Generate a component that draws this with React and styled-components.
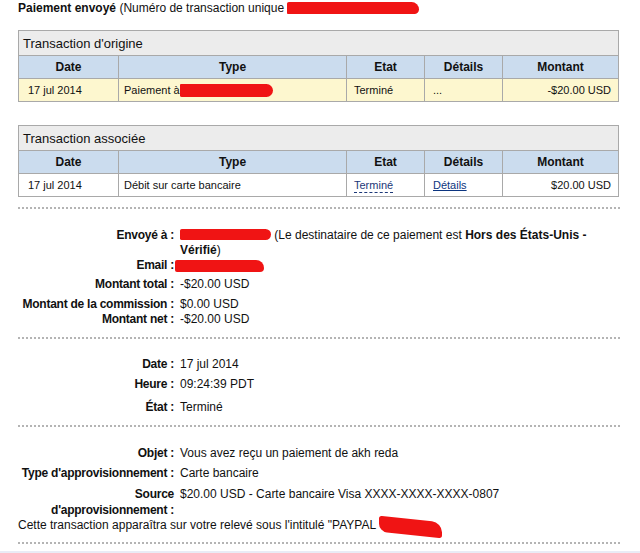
import React from "react";
import styled, { createGlobalStyle } from "styled-components";

const Global = createGlobalStyle`
  body {
    margin: 0;
    background: #fff;
    font-family: "Liberation Sans", Arial, sans-serif;
    color: #111;
  }
`;

const Page = styled.div`
  width: 640px;
  height: 553px;
  overflow: hidden;
  position: relative;
`;

const Title = styled.div`
  padding-left: 18px;
  font-size: 12px;
  line-height: 16px;
  white-space: nowrap;
  b { font-weight: bold; }
`;

const Redact = styled.span`
  display: inline-block;
  width: ${(p) => p.$w}px;
  height: ${(p) => p.$h}px;
  margin-left: ${(p) => p.$ml || 0}px;
  vertical-align: ${(p) => p.$va || 0}px;
  background: #f01414;
  border-radius: ${(p) => p.$r || "2px 6px 6px 2px"};
  transform: skewY(${(p) => p.$skew || 0}deg);
`;

const Table = styled.table`
  margin: ${(p) => p.$mt}px 0 0 18px;
  width: 600px;
  border-collapse: collapse;
  table-layout: fixed;
  font-size: 11px;
`;

const CaptionCell = styled.th`
  height: 24px;
  padding: 0 4px;
  background: #ececec;
  border: 1px solid #a9a9a9;
  text-align: left;
  font-weight: normal;
  font-size: 13px;
`;

const Th = styled.th`
  height: 22px;
  padding: 0;
  background: #cbdcee;
  border: 1px solid #a9a9a9;
  font-size: 12px;
  font-weight: bold;
  text-align: center;
`;

const Td = styled.td`
  height: 22px;
  padding: 0 ${(p) => (p.$right ? 7 : 6)}px 0 ${(p) => p.$pl || 6}px;
  background: ${(p) => (p.$yellow ? "#fdf7cf" : "#fff")};
  border: 1px solid #a9a9a9;
  text-align: ${(p) => (p.$right ? "right" : "left")};
  white-space: nowrap;
  overflow: hidden;
`;

const DashLink = styled.span`
  color: #1c3878;
  border-bottom: 1px dashed #1c3878;
  padding-bottom: 1px;
`;

const Link = styled.span`
  color: #0c3580;
  text-decoration: underline;
`;

const Divider = styled.div`
  margin: ${(p) => p.$mt}px 0 0 18px;
  width: 602px;
  border-top: 2px dotted #b4b4b4;
`;

const Row = styled.div`
  display: grid;
  grid-template-columns: 156px 436px;
  column-gap: 6px;
  padding-left: 18px;
  margin-top: ${(p) => p.$mt || 0}px;
  font-size: 12px;
  line-height: ${(p) => p.$lh || 15}px;
`;

const Label = styled.div`
  font-weight: bold;
  text-align: right;
  letter-spacing: -0.25px;
  white-space: ${(p) => (p.$wrap ? "normal" : "nowrap")};
`;

const Value = styled.div`
  b { font-weight: bold; }
`;

const Note = styled.div`
  padding-left: 18px;
  font-size: 12px;
  line-height: 15px;
  white-space: nowrap;
`;

const BottomRule = styled.div`
  position: absolute;
  left: 0;
  right: 0;
  bottom: 0;
  height: 2px;
  background: #e9ebf5;
`;

const cols = [100, 228, 78, 78, 116];

function TxTable({ mt, caption, row, yellow }) {
  return (
    <Table $mt={mt}>
      <colgroup>
        {cols.map((w, i) => (
          <col key={i} style={{ width: w }} />
        ))}
      </colgroup>
      <thead>
        <tr>
          <CaptionCell colSpan={5}>{caption}</CaptionCell>
        </tr>
        <tr>
          <Th>Date</Th>
          <Th>Type</Th>
          <Th>Etat</Th>
          <Th>Détails</Th>
          <Th>Montant</Th>
        </tr>
      </thead>
      <tbody>
        <tr>
          <Td $yellow={yellow} $pl={9}>{row.date}</Td>
          <Td $yellow={yellow} $pl={5}>{row.type}</Td>
          <Td $yellow={yellow} $pl={7}>{row.etat}</Td>
          <Td $yellow={yellow} $pl={8}>{row.details}</Td>
          <Td $yellow={yellow} $right>{row.montant}</Td>
        </tr>
      </tbody>
    </Table>
  );
}

export default function App() {
  return (
    <Page>
      <Global />
      <Title>
        <b>Paiement envoyé</b> (Numéro de transaction unique{" "}
        <Redact $w={132} $h={12} $va={-2} $r="2px 8px 5px 1px" />
      </Title>

      <TxTable
        mt={14}
        caption="Transaction d'origine"
        yellow
        row={{
          date: "17 jul 2014",
          type: (
            <>
              Paiement à<Redact $w={93} $h={13} $va={-3} $r="1px 7px 7px 2px" />
            </>
          ),
          etat: "Terminé",
          details: "...",
          montant: "-$20.00 USD",
        }}
      />

      <TxTable
        mt={23}
        caption="Transaction associée"
        row={{
          date: "17 jul 2014",
          type: "Débit sur carte bancaire",
          etat: <DashLink>Terminé</DashLink>,
          details: <Link>Détails</Link>,
          montant: "$20.00 USD",
        }}
      />

      <Divider $mt={10} />
      <Row $mt={19}>
        <Label>Envoyé à :</Label>
        <Value>
          <Redact $w={91} $h={11} $va={-1} $r="2px 6px 6px 2px" /> (Le
          destinataire de ce paiement est <b>Hors des États-Unis - Vérifié</b>)
        </Value>
      </Row>
      <Row>
        <Label>Email :</Label>
        <Value>
          <Redact $w={89} $h={12} $ml={-5} $va={-3} $r="2px 8px 4px 2px" />
        </Value>
      </Row>
      <Row $mt={4}>
        <Label>Montant total :</Label>
        <Value>-$20.00 USD</Value>
      </Row>
      <Row $mt={5}>
        <Label>Montant de la commission :</Label>
        <Value>$0.00 USD</Value>
      </Row>
      <Row>
        <Label>Montant net :</Label>
        <Value>-$20.00 USD</Value>
      </Row>

      <Divider $mt={10} />
      <Row $mt={18}>
        <Label>Date :</Label>
        <Value>17 jul 2014</Value>
      </Row>
      <Row $mt={5}>
        <Label>Heure :</Label>
        <Value>09:24:39 PDT</Value>
      </Row>
      <Row $mt={8}>
        <Label>État :</Label>
        <Value>Terminé</Value>
      </Row>

      <Divider $mt={10} />
      <Row $mt={19}>
        <Label>Objet :</Label>
        <Value>Vous avez reçu un paiement de akh reda</Value>
      </Row>
      <Row $mt={5}>
        <Label>Type d'approvisionnement :</Label>
        <Value>Carte bancaire</Value>
      </Row>
      <Row $mt={5} $lh={16}>
        <Label $wrap>Source d'approvisionnement :</Label>
        <Value>$20.00 USD - Carte bancaire Visa XXXX-XXXX-XXXX-0807</Value>
      </Row>
      <Note>
        Cette transaction apparaîtra sur votre relevé sous l'intitulé "PAYPAL{" "}
        <Redact $w={63} $h={16} $va={-6} $skew={6} $r="3px 10px 3px 8px" />
      </Note>
      <Divider $mt={7} />
      <BottomRule />
    </Page>
  );
}
